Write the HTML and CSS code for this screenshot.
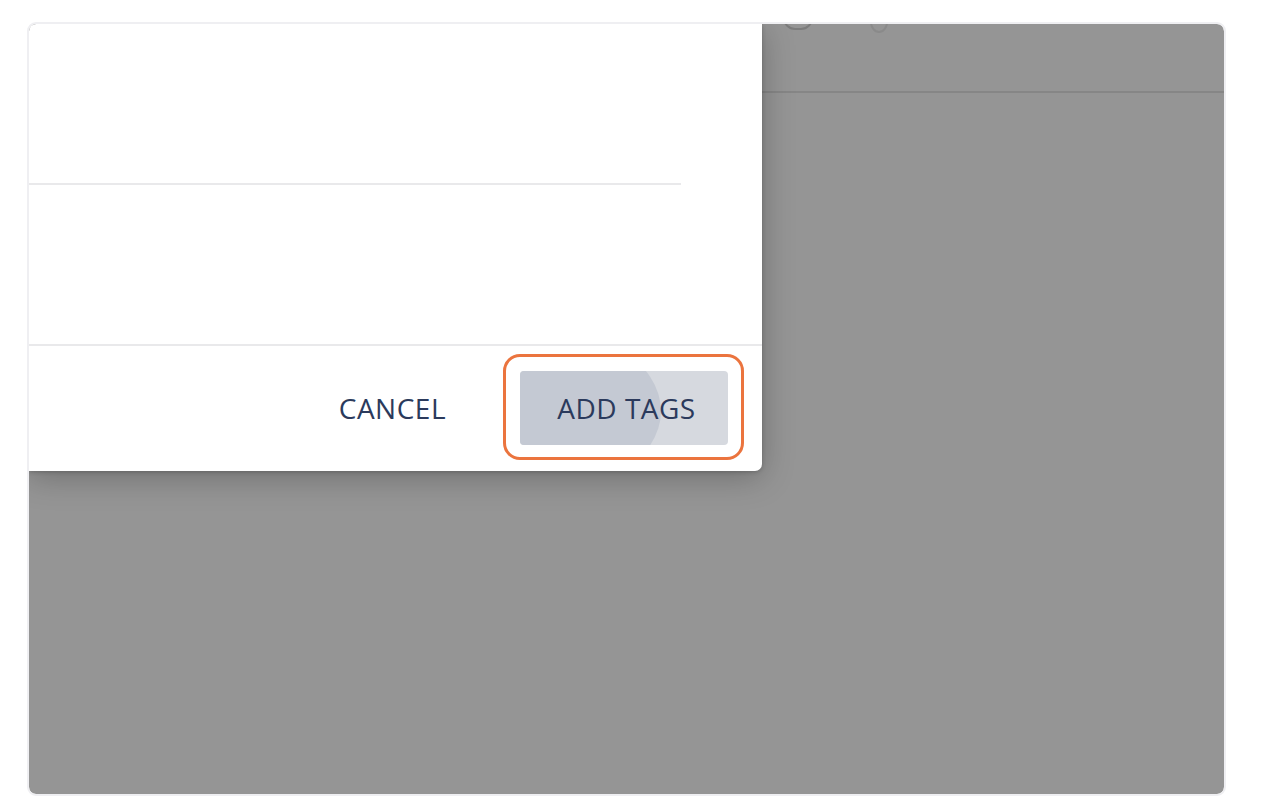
FILE: index.html
```html
<!DOCTYPE html>
<html>
<head>
<meta charset="utf-8">
<link rel="stylesheet" href="styles.css">
</head>
<body>
<div class="frame">
  <div class="screen">
    <div class="topbar">
      <span class="icon icon-a"></span>
      <span class="icon icon-b"></span>
    </div>
    <div class="dialog">
      <div class="field-area">
        <div class="field-line"></div>
      </div>
      <div class="body-area"></div>
      <div class="actions">
        <button class="btn btn-text">CANCEL</button>
        <div class="highlight">
          <button class="btn btn-primary"><span class="ripple"></span><span class="label">ADD TAGS</span></button>
        </div>
      </div>
    </div>
  </div>
</div>
</body>
</html>
```
FILE: styles.css
```css
html, body {
  margin: 0;
  padding: 0;
  background: #ffffff;
}
body {
  width: 1268px;
  height: 804px;
  overflow: hidden;
  font-family: "Open Sans", "Liberation Sans", sans-serif;
}
.frame {
  margin: 22px 0 0 27px;
  width: 1199px;
  height: 774px;
  box-sizing: border-box;
  border: 2px solid #efeff2;
  border-radius: 9px;
  overflow: hidden;
  background: #ffffff;
}
.screen {
  position: relative;
  width: 100%;
  height: 100%;
  background: #959595;
  border-radius: 7px;
  overflow: hidden;
}
.topbar {
  height: 67px;
  border-bottom: 2px solid #868686;
  position: relative;
}
.icon {
  position: absolute;
  border: 2px solid #7c7c7c;
  border-radius: 50%;
  box-sizing: border-box;
}
.icon-a {
  left: 754px;
  top: -24px;
  width: 30px;
  height: 30px;
  border-radius: 12px;
}
.icon-b {
  left: 841px;
  top: -13px;
  width: 18px;
  height: 22px;
  border-color: #8a8a8a;
}
.dialog {
  position: absolute;
  left: 0;
  top: 0;
  width: 733px;
  height: 447px;
  background: #ffffff;
  border-radius: 0 0 7px 0;
  box-shadow: 0 6px 32px rgba(0, 0, 0, 0.26), 0 1px 4px rgba(0, 0, 0, 0.2);
  display: flex;
  flex-direction: column;
}
.field-area {
  height: 161px;
  display: flex;
  align-items: flex-end;
}
.field-line {
  width: 652px;
  height: 2px;
  background: #e9e9eb;
}
.body-area {
  height: 159px;
  border-bottom: 2px solid #e9e9eb;
}
.actions {
  flex: 1;
  display: flex;
  align-items: center;
  justify-content: flex-end;
  padding-right: 18px;
}
.btn {
  font-family: "Open Sans", "Liberation Sans", sans-serif;
  font-size: 28px;
  font-weight: 500;
  color: #2b3a5c;
  letter-spacing: 0.5px;
  border: none;
  background: transparent;
  cursor: pointer;
}
.btn-text {
  padding: 0;
  margin-right: 57px;
  margin-top: -1px;
}
.highlight {
  width: 241px;
  height: 106px;
  box-sizing: border-box;
  border: 3px solid #eb743e;
  border-radius: 17px;
  display: flex;
  align-items: center;
  justify-content: center;
  margin-top: -3px;
}
.btn-primary {
  position: relative;
  width: 208px;
  height: 74px;
  border-radius: 4px;
  background: #d6d9df;
  overflow: hidden;
  padding: 0 0 0 6px;
  margin-top: 2px;
}
.ripple {
  position: absolute;
  left: -141px;
  top: -49px;
  width: 282px;
  height: 178px;
  border-radius: 50%;
  background: #c4c9d3;
}
.label {
  position: relative;
}
```
